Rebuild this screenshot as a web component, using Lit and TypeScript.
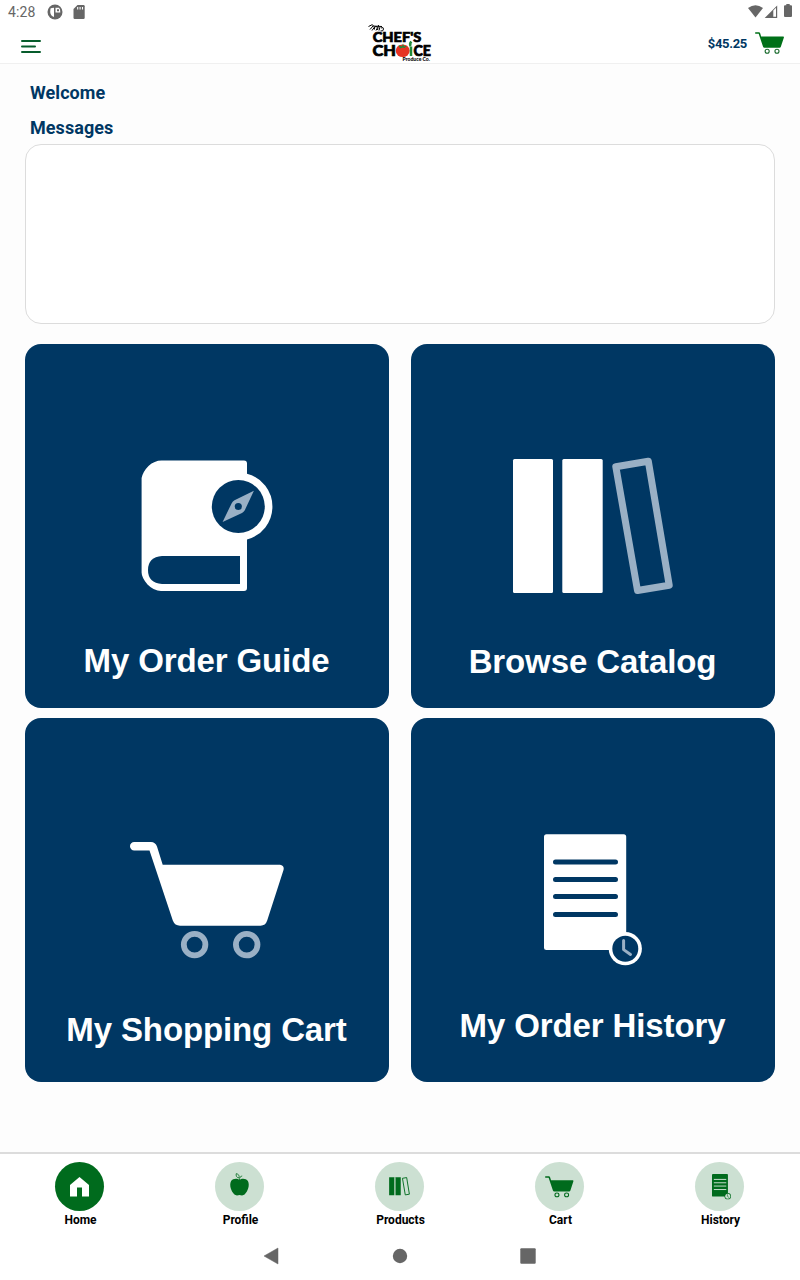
import { LitElement, html, svg, css } from "lit";
import { customElement, property } from "lit/decorators.js";

type IconName = "guide" | "catalog" | "cart" | "history" | "home" | "apple";

// Each glyph is drawn on its own canvas; `solid`, `soft` and `cut` are CSS classes.
const glyphs: Record<IconName, { box: string; art: unknown }> = {
  guide: {
    box: "141 460 132 131",
    art: svg`
      <path class="solid" d="M161.500 460.500H244Q247 460.500 247 463.500V473.700A34 34 0 0 1 247 539.500V588Q247 591 244 591H161Q154 591 147.500 584.500Q141.600 577.500 141.600 572.500V478Q143 471.500 148.500 466Q154.500 460.500 161.500 460.500Z"/>
      <path class="cut" d="M162 556H240V584H162Q148 583 148 570Q148 557 162 556Z"/>
      <circle class="cut" cx="238.300" cy="506.600" r="26.500"/>
      <path class="soft" fill-rule="evenodd" d="M253.900 490.800L244.800 510.200Q243.800 512 242 513L222.600 521.900L231.700 503.200Q232.700 501.200 234.500 500.200ZM238.300 502.900A3.600 3.600 0 1 0 238.300 510.100A3.600 3.600 0 1 0 238.300 502.900Z"/>`,
  },
  catalog: {
    box: "512 457 162 138",
    art: svg`
      <rect class="solid" x="513" y="459" width="40" height="134" rx="1.500"/>
      <rect class="solid" x="562.300" y="459" width="40.400" height="134" rx="1.500"/>
      <path class="soft-line" stroke-width="7" stroke-linejoin="round" d="M615.800 466.700L648.300 461.200L669.200 585.200L637.500 590.500Z"/>`,
  },
  cart: {
    box: "130 841 154 118",
    art: svg`
      <path class="solid" d="M134.200 842H151Q155.300 842 157 846.500L162.700 864.800H280Q284.600 865.500 283.500 870L267.200 920.500Q265.500 925.700 260.500 925.700H180Q174.800 925.700 172.800 920.500L149.500 850.400H134.200A4.200 4.200 0 0 1 134.200 842Z"/>
      <circle class="soft-line" stroke-width="5.800" cx="194.600" cy="944.600" r="10.800"/>
      <circle class="soft-line" stroke-width="5.800" cx="246.700" cy="944.600" r="10.800"/>`,
  },
  history: {
    box: "544 834 98 132",
    art: svg`
      <rect class="solid" x="544" y="834.300" width="82.200" height="115.700" rx="2.500"/>
      <path class="cut-line" stroke-width="5" stroke-linecap="round" d="M555.500 862H615.500M555.500 879.400H615.500M555.500 896.400H615.500M555.500 914.400H615.500"/>
      <circle class="solid" cx="625.300" cy="948.700" r="16.600"/>
      <circle class="cut" cx="625.300" cy="948.700" r="13"/>
      <path class="soft-line" stroke-width="3" stroke-linecap="round" stroke-linejoin="round" d="M623.600 940.500V949.600L630.500 954.500"/>`,
  },
  home: {
    box: "0 0 19 19.500",
    art: svg`<path class="solid" d="M9.500 0L19 8V19.500H12V10.500H7V19.500H0V8Z"/>`,
  },
  apple: {
    box: "0 0 19 23",
    art: svg`
      <path class="solid" d="M9.500 6.800C11.500 5.200 16 5 17.900 8C20.200 12.500 17.500 18.500 14.800 21.300C13 23 11 22.300 9.500 22C8 22.300 6 23 4.200 21.300C1.500 18.500-1.200 12.500 1.100 8C3 5 7.500 5.200 9.500 6.800Z"/>
      <path class="soft-line" stroke-width=".8" d="M9.500 7C9.300 4.500 10.500 3.300 12.200 3M9 5C6.200 4.500 5.800 2.500 6.300.6C8.700 1.300 9.700 2.700 9 5Z"/>`,
  },
};

@customElement("app-icon")
class AppIcon extends LitElement {
  @property() name: IconName = "home";
  static styles = css`
    :host { display: block; }
    svg { display: block; width: 100%; height: 100%; overflow: visible; }
    .solid { fill: var(--solid, #fff); }
    .cut { fill: var(--cut, #003763); }
    .soft { fill: var(--soft, #9ab0c5); }
    .soft-line { fill: none; stroke: var(--soft, #9ab0c5); }
    .cut-line { fill: none; stroke: var(--cut, #003763); }
  `;
  render() {
    const g = glyphs[this.name];
    return html`<svg viewBox=${g.box} preserveAspectRatio="none">${g.art}</svg>`;
  }
}

@customElement("app-root")
class AppRoot extends LitElement {
  static styles = css`
    * { box-sizing: border-box; }
    :host {
      display: flex; flex-direction: column; width: 800px; height: 1280px;
      overflow: hidden; background: #fff; font-family: Roboto, sans-serif;
    }
    svg { display: block; }
    .status { height: 24px; display: flex; justify-content: space-between; padding: 0 7px 0 8px; color: #666; }
    .status .left { display: flex; align-items: center; font-size: 14px; }
    .time { width: 39px; letter-spacing: .1px; }
    .bar {
      height: 40px; display: grid; grid-template-columns: 1fr 64px 1fr;
      border-bottom: 1px solid #f0f0f0;
    }
    .menu { padding: 16px 0 0 21px; }
    .total { display: flex; justify-content: flex-end; padding: 8px 16px 0 0; gap: 8px; }
    .sum { font-size: 13px; font-weight: 700; line-height: 23px; color: #003763; letter-spacing: -.3px; }
    .total app-icon { width: 29px; height: 22px; --solid: #007018; --soft: #17692b; }
    .logo text { font-family: Lato, sans-serif; font-weight: 900; }
    main { flex: 1; background: #fdfdfd; padding: 17px 25px 0; }
    h2 { margin: 0 0 0 5px; font-size: 18px; line-height: 24px; font-weight: 700; color: #003763; letter-spacing: .07px; }
    h2 + h2 { margin-top: 11px; }
    .messages { height: 180px; margin-top: 4px; border: 1px solid #dcdcdc; border-radius: 16px; background: #fff; }
    .tiles { display: grid; grid-template-columns: 364px 364px; gap: 10px 22px; margin-top: 20px; }
    .tile { display: flow-root; height: 364px; border-radius: 16px; background: #003763; color: #fff; }
    .label {
      font: 700 33px/38px "Liberation Sans", Arial, sans-serif; text-align: center; white-space: nowrap;
      letter-spacing: -.12px; padding-right: 1px;
    }
    .tile.guide app-icon { width: 132px; height: 131px; margin: 116px 0 51px 116px; }
    .tile.catalog app-icon { width: 162px; height: 138px; margin: 113px 0 48px 101px; }
    .tile.cart app-icon { width: 154px; height: 118px; margin: 123px 0 52px 105px; }
    .tile.history app-icon { width: 98px; height: 132px; margin: 116px 0 41px 133px; }
    nav { height: 80px; border-top: 2px solid #dcdcdc; display: grid; grid-template-columns: repeat(5, 160px); }
    .tab { display: flex; flex-direction: column; align-items: center; padding-top: 7.500px; font-size: 12px; font-weight: 700; line-height: 16px; color: #000; }
    .tab span { padding-left: 1px; }
    .disc {
      width: 49px; height: 49px; margin: 0 1px 1.500px 0; border-radius: 50%; background: #cce0d2;
      display: grid; place-items: center; --solid: #006b1d; --cut: #cce0d2; --soft: #006b1d;
    }
    .disc.on { background: #006b1d; --solid: #fff; }
    .disc.home app-icon { width: 19px; height: 19.500px; margin-top: 1.500px; }
    .disc.apple app-icon { width: 19px; height: 23px; margin-top: -3px; }
    .disc.catalog app-icon { width: 21px; height: 18.500px; }
    .disc.cart app-icon { width: 28.500px; height: 21.500px; margin-top: 2px; }
    .disc.history app-icon { width: 19px; height: 25.500px; margin-left: 3px; margin-top: 1.500px; }
    .system { height: 48px; }
  `;

  tile(name: IconName, label: string) {
    return html`<div class="tile ${name}"><app-icon name=${name}></app-icon><div class="label">${label}</div></div>`;
  }

  tab(name: IconName, label: string, on = "") {
    return html`<div class="tab"><div class="disc ${name} ${on}"><app-icon name=${name}></app-icon></div><span>${label}</span></div>`;
  }

  render() {
    return html`
      <div class="status">
        <div class="left">
          <span class="time">4:28</span>
          <svg width="40" height="24" viewBox="47 0 40 24">
            <circle cx="55" cy="12" r="7.500" fill="#666"/>
            <path d="M50.500 8.500Q51.500 7.800 54 7.800V17Q50.500 16 50.200 12ZM55.500 7.800H59Q60.500 9 60.300 12.500H55.500Z" fill="#fff"/>
            <path d="M57 9.200H59V11.300H57Z" fill="#666"/>
            <path d="M77.500 5H83.500Q84.700 5 84.700 6.200V17.800Q84.700 19 83.500 19H74.700Q73.500 19 73.500 17.800V9Z" fill="#666"/>
            <path d="M77.700 7V9.500M80.100 7V9.500M82.500 7V9.500" stroke="#fff" stroke-width="1.100"/>
          </svg>
        </div>
        <svg width="46" height="24" viewBox="747 0 46 24" fill="#666">
          <path d="M748 8Q755.500 2.500 763 8L755.500 17.500Z"/>
          <path d="M777.200 5.500V18H764.700Z"/><path d="M773.300 10.500L776 7.800V16.800H773.300Z" fill="#fff"/>
          <path d="M786.300 4H789.700V5.200H791Q792 5.200 792 6.200V16Q792 17 791 17H785Q784 17 784 16V6.200Q784 5.200 785 5.200H786.300Z"/>
        </svg>
      </div>
      <header class="bar">
        <div class="menu">
          <svg width="20" height="14" viewBox="0 0 20 14" stroke="#075c2c" stroke-width="2" stroke-linecap="round">
            <path d="M1 1H19M1 6.500H14M1 12H19"/>
          </svg>
        </div>
        <svg class="logo" width="64" height="39" viewBox="368 24 64 39">
          <path d="M368.500 26.500L372.500 24.500M370 29.500L373.500 25.500M372 30.500L375 26.500M374.500 29.500Q373.500 26.500 376 26.500T376 30.500M378.500 25L377.500 30M380 27L379 30.500M381 28Q383.500 26.500 383.500 29T380.500 31M372 26L382 26.500" fill="none" stroke="#000" stroke-width="1"/>
          <text x="372.800" y="42.300" font-size="14" textLength="48.500" lengthAdjust="spacingAndGlyphs" stroke="#000" stroke-width=".7">CHEF'S</text>
          <text x="372.500" y="56.300" font-size="15.500" textLength="23.500" lengthAdjust="spacingAndGlyphs" stroke="#000" stroke-width=".7">CH</text>
          <ellipse cx="402.700" cy="50.700" rx="7" ry="6.300" fill="#e63323"/>
          <path d="M398.500 45L402 46.500L403 43.500L404 46.500L407.500 45.500L404.500 48L402.500 47.500L400 48.500Z" fill="#218a3a"/>
          <path d="M411 46.500V56M410.700 46Q409.300 44 411.300 41.500" fill="none" stroke="#218a3a" stroke-width="2.500"/>
          <text x="413.500" y="56.300" font-size="15.500" textLength="17.500" lengthAdjust="spacingAndGlyphs" stroke="#000" stroke-width=".7">CE</text>
          <text x="402.500" y="61.300" font-size="5" textLength="27.500" lengthAdjust="spacingAndGlyphs">Produce Co.</text>
        </svg>
        <div class="total"><span class="sum">$45.25</span><app-icon name="cart"></app-icon></div>
      </header>
      <main>
        <h2>Welcome</h2>
        <h2>Messages</h2>
        <div class="messages"></div>
        <div class="tiles">
          ${this.tile("guide", "My Order Guide")}
          ${this.tile("catalog", "Browse Catalog")}
          ${this.tile("cart", "My Shopping Cart")}
          ${this.tile("history", "My Order History")}
        </div>
      </main>
      <nav>
        ${this.tab("home", "Home", "on")}
        ${this.tab("apple", "Profile")}
        ${this.tab("catalog", "Products")}
        ${this.tab("cart", "Cart")}
        ${this.tab("history", "History")}
      </nav>
      <svg class="system" width="800" height="48" viewBox="0 1232 800 48" fill="#666">
        <path d="M264 1256L278 1248V1264Z" stroke="#666" stroke-width=".5" stroke-linejoin="round"/>
        <circle cx="400" cy="1256" r="7.200"/>
        <rect x="520.300" y="1248.300" width="15.400" height="15.400" rx="1"/>
      </svg>
    `;
  }
}
